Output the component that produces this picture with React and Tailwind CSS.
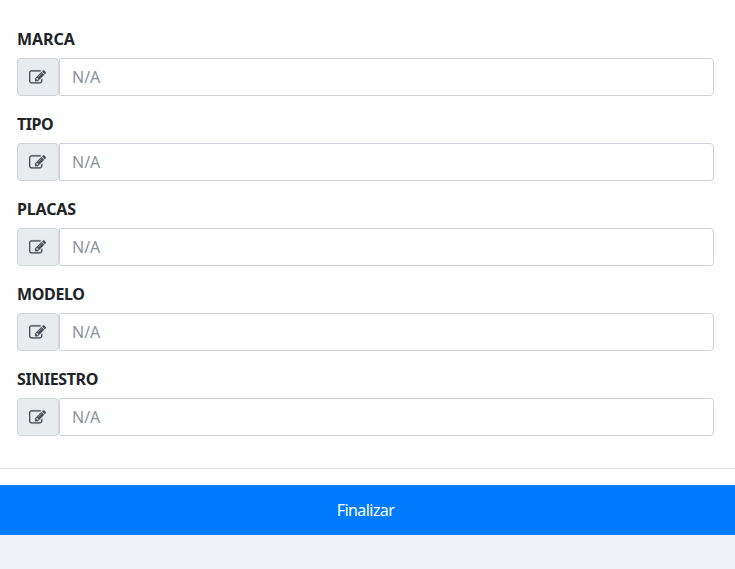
const EDIT_PATH =
  'M888 1184l116-116-152-152-116 116v56h96v96h56zm440-720q-16-16-33 1l-350 350q-17 17-1 33t33-1l350-350q17-17 1-33zm80 594v190q0 119-84.5 203.5t-203.5 84.5h-832q-119 0-203.5-84.5t-84.5-203.5v-832q0-119 84.5-203.5t203.5-84.5h832q63 0 117 25 15 7 18 23 3 17-9 29l-49 49q-14 14-32 8-23-6-45-6h-832q-66 0-113 47t-47 113v832q0 66 47 113t113 47h832q66 0 113-47t47-113v-126q0-13 9-22l64-64q15-15 35-7t20 29zm-96-738l288 288-672 672h-288v-288zm444 132l-92 92-288-288 92-92q28-28 68-28t68 28l152 152q28 28 28 68t-28 68z';

const fields = [
  { id: 'marca', label: 'MARCA', tracking: 'tracking-[-0.05px]' },
  { id: 'tipo', label: 'TIPO', tracking: 'tracking-[-0.5px]' },
  { id: 'placas', label: 'PLACAS', tracking: 'tracking-[-0.15px]' },
  { id: 'modelo', label: 'MODELO', tracking: 'tracking-[-0.35px]' },
  { id: 'siniestro', label: 'SINIESTRO', tracking: 'tracking-[-0.38px]' },
];

function EditIcon() {
  return (
    <svg viewBox="0 0 1792 1792" className="h-[17px] w-[17px] fill-[#495057] stroke-[#495057] stroke-[24]" aria-hidden="true">
      <path d={EDIT_PATH} />
    </svg>
  );
}

function Field({ id, label, tracking }) {
  return (
    <div>
      <label htmlFor={id} className={`mb-[7px] block h-6 text-base leading-6 font-bold text-[#212529] ${tracking}`}>
        <span>{label}</span>
      </label>
      <div className="flex h-[38px]">
        <span className="flex w-[42px] items-center rounded border border-[#ced4da] bg-[#e9ecef] pl-[11px]">
          <EditIcon />
        </span>
        <input
          id={id}
          placeholder="N/A"
          className="min-w-0 flex-1 rounded-l-xs rounded-r border border-[#ced4da] bg-white px-3 text-base text-[#495057] outline-none placeholder:text-[#8b939b]"
        />
      </div>
    </div>
  );
}

export default function App() {
  return (
    <div className="flex h-[569px] flex-col bg-[#f0f1f7] font-['Noto_Sans','Open_Sans',sans-serif]">
      <main className="h-[485px] bg-[#fefefe]">
        <form className="flex h-[469px] flex-col gap-4 border-b border-[#dfe1e4] pt-[27px] pr-[21px] pl-[17px]">
          {fields.map((f) => (
            <Field key={f.id} {...f} />
          ))}
        </form>
      </main>
      <button className="h-[50px] w-full bg-[#007bff] pr-[4px] text-base tracking-[-0.55px] text-white">Finalizar</button>
    </div>
  );
}
